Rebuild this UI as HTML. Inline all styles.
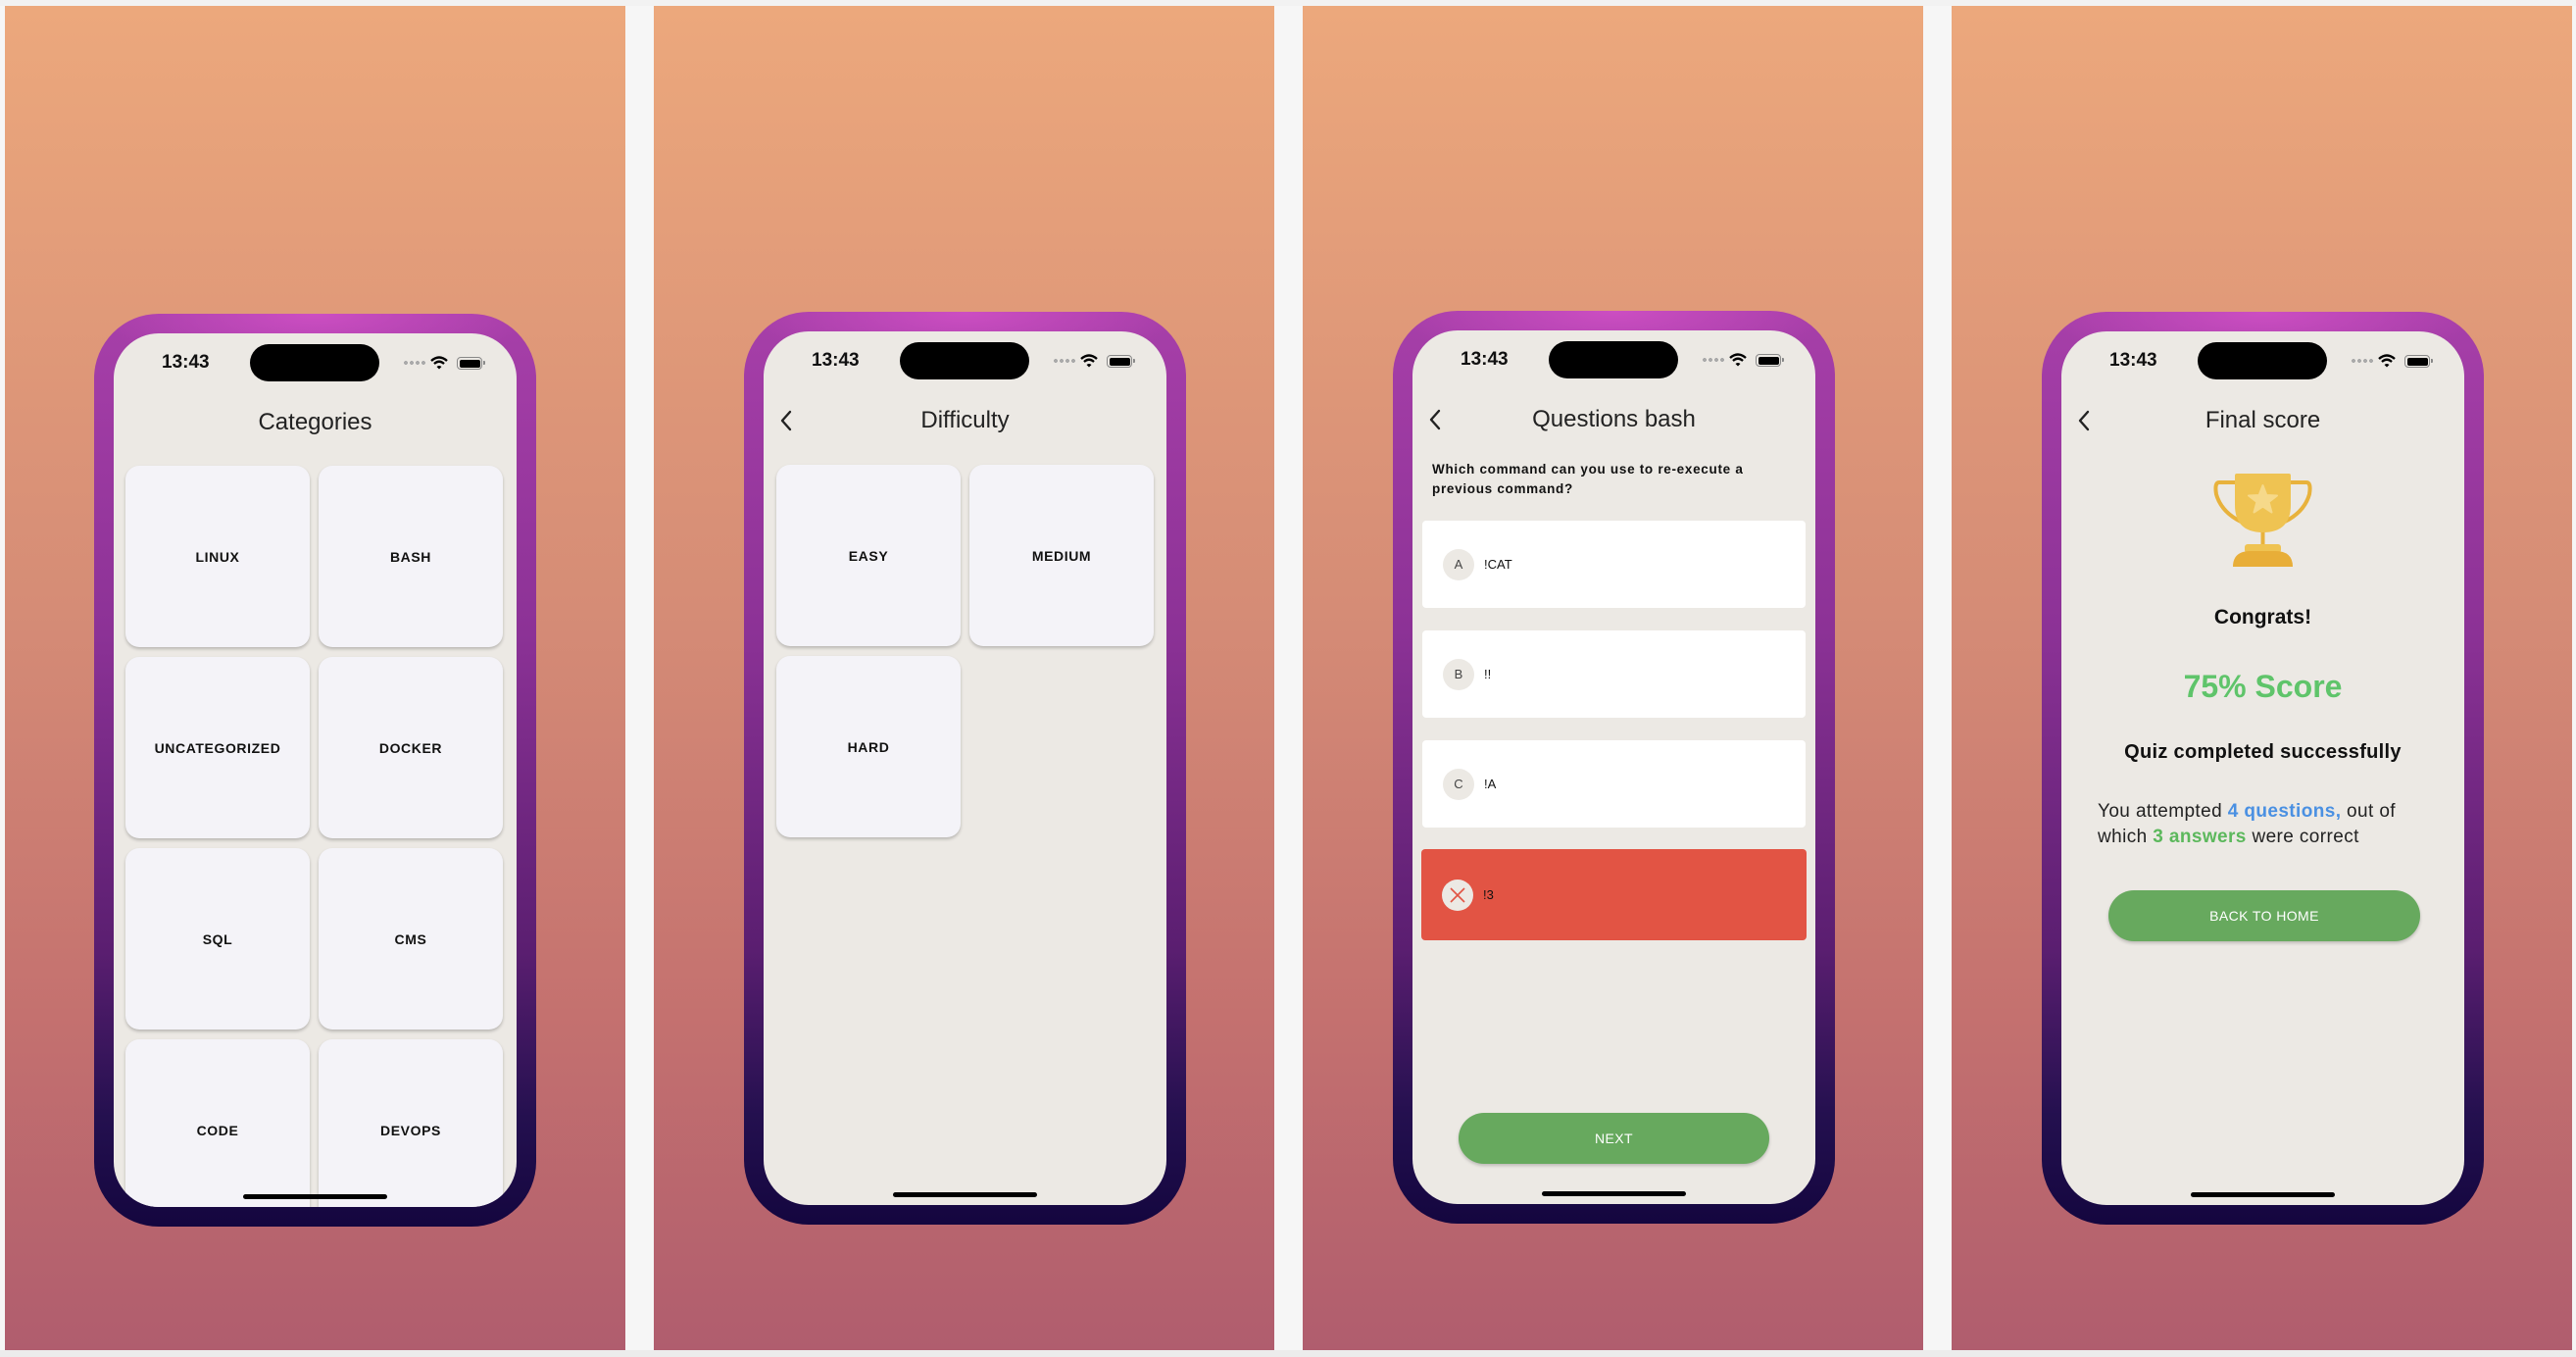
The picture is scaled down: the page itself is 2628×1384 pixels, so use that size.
<!DOCTYPE html>
<html><head><meta charset="utf-8"><style>
*{margin:0;padding:0;box-sizing:border-box}
body{width:2628px;height:1384px;background:#f6f6f6;position:relative;overflow:hidden;font-family:"Liberation Sans",sans-serif}
.topbar{position:absolute;left:0;top:0;width:2628px;height:6px;background:#f2f2f2}
.botbar{position:absolute;left:0;top:1377px;width:2628px;height:7px;background:#ececec}
.panel{position:absolute;top:6px;height:1371px;width:633px;background:linear-gradient(#eca87c,#d58c76 45%,#c4716f 75%,#b05d6e)}
.phone{position:absolute;width:451px;height:931px;border-radius:66px;background:radial-gradient(ellipse 220px 60px at 50% 0,#cc4ec2,rgba(204,78,194,0)),linear-gradient(#a73fa9,#8c3296 35%,#5a1e70 70%,#24104f 88%,#14063f)}
.screen{position:absolute;left:20px;top:20px;width:411px;height:891px;border-radius:46px;background:#ece9e4;overflow:hidden}
.time{position:absolute;left:49px;top:19px;font-size:19px;font-weight:bold;color:#111}
.island{position:absolute;left:139px;top:11px;width:132px;height:38px;border-radius:19px;background:#000}
.dots{position:absolute;left:295px;top:28px;width:24px;height:4px;background:radial-gradient(circle 2px,#aaa 95%,transparent) 0 0/6px 4px repeat-x}
.wifi{position:absolute;left:323px;top:23px}
.bat{position:absolute;left:350px;top:24px;width:26px;height:13px;border:1.5px solid #888;border-radius:4px;padding:1.5px}
.bat i{display:block;width:100%;height:100%;background:#000;border-radius:2px}
.bat:after{content:"";position:absolute;right:-4px;top:3px;width:2px;height:4px;background:#888;border-radius:0 1px 1px 0}
.title{position:absolute;left:0;width:411px;top:77px;text-align:center;font-size:24px;color:#222}
.back{position:absolute;left:14px;top:79px}
.card{position:absolute;width:188px;height:185px;background:#f4f3f8;border-radius:14px;box-shadow:0 2px 3px rgba(0,0,0,.22);display:flex;align-items:center;justify-content:center;font-size:14px;font-weight:bold;color:#111;letter-spacing:.6px}
.home{position:absolute;left:132px;top:878px;width:147px;height:5px;border-radius:3px;background:#000}
.q{position:absolute;left:20px;top:132px;width:380px;font-size:13.5px;font-weight:bold;letter-spacing:.7px;line-height:20px;color:#111}
.opt{position:absolute;left:10px;width:391px;height:89px;background:#fff;border-radius:4px}
.opt .c{position:absolute;left:21px;top:29px;width:32px;height:32px;border-radius:16px;background:#ece9e4;text-align:center;line-height:32px;font-size:13px;color:#444}
.opt .t{position:absolute;left:63px;top:37px;font-size:13px;color:#111}
.btn{position:absolute;height:52px;border-radius:26px;background:#67a95e;color:#fff;font-size:14px;text-align:center;line-height:52px;box-shadow:0 2px 3px rgba(0,0,0,.2);letter-spacing:.4px}
.center{position:absolute;left:0;width:411px;text-align:center;color:#111}
</style></head><body>
<div class="topbar"></div><div class="botbar"></div>

<!-- Panel 1 -->
<div class="panel" style="left:5px"></div>
<div class="phone" style="left:96px;top:320px"><div class="screen">
<div class="time">13:43</div><div class="island"></div><div class="dots"></div>
<svg class="wifi" width="18" height="14" viewBox="0 0 18 14"><path d="M1 5 Q9 -2 17 5" stroke="#000" stroke-width="2.4" fill="none"/><path d="M4 8 Q9 3.5 14 8" stroke="#000" stroke-width="2.4" fill="none"/><path d="M6.5 11 L9 13.5 L11.5 11 Q9 9 6.5 11Z" fill="#000"/></svg>
<div class="bat"><i></i></div>
<div class="title">Categories</div>
<div class="card" style="left:12px;top:135px">LINUX</div>
<div class="card" style="left:209px;top:135px">BASH</div>
<div class="card" style="left:12px;top:330px">UNCATEGORIZED</div>
<div class="card" style="left:209px;top:330px">DOCKER</div>
<div class="card" style="left:12px;top:525px">SQL</div>
<div class="card" style="left:209px;top:525px">CMS</div>
<div class="card" style="left:12px;top:720px">CODE</div>
<div class="card" style="left:209px;top:720px">DEVOPS</div>
<div class="home"></div>
</div></div>

<!-- Panel 2 -->
<div class="panel" style="left:667px"></div>
<div class="phone" style="left:759px;top:318px"><div class="screen">
<div class="time">13:43</div><div class="island"></div><div class="dots"></div>
<svg class="wifi" width="18" height="14" viewBox="0 0 18 14"><path d="M1 5 Q9 -2 17 5" stroke="#000" stroke-width="2.4" fill="none"/><path d="M4 8 Q9 3.5 14 8" stroke="#000" stroke-width="2.4" fill="none"/><path d="M6.5 11 L9 13.5 L11.5 11 Q9 9 6.5 11Z" fill="#000"/></svg>
<div class="bat"><i></i></div>
<svg class="back" width="20" height="24" viewBox="0 0 20 24"><polyline points="13,3 5,12 13,21" stroke="#222" stroke-width="2.4" fill="none" stroke-linecap="round" stroke-linejoin="round"/></svg>
<div class="title">Difficulty</div>
<div class="card" style="left:13px;top:136px">EASY</div>
<div class="card" style="left:210px;top:136px">MEDIUM</div>
<div class="card" style="left:13px;top:331px">HARD</div>
<div class="home"></div>
</div></div>

<!-- Panel 3 -->
<div class="panel" style="left:1329px"></div>
<div class="phone" style="left:1421px;top:317px"><div class="screen">
<div class="time">13:43</div><div class="island"></div><div class="dots"></div>
<svg class="wifi" width="18" height="14" viewBox="0 0 18 14"><path d="M1 5 Q9 -2 17 5" stroke="#000" stroke-width="2.4" fill="none"/><path d="M4 8 Q9 3.5 14 8" stroke="#000" stroke-width="2.4" fill="none"/><path d="M6.5 11 L9 13.5 L11.5 11 Q9 9 6.5 11Z" fill="#000"/></svg>
<div class="bat"><i></i></div>
<svg class="back" width="20" height="24" viewBox="0 0 20 24"><polyline points="13,3 5,12 13,21" stroke="#222" stroke-width="2.4" fill="none" stroke-linecap="round" stroke-linejoin="round"/></svg>
<div class="title">Questions bash</div>
<div class="q">Which command can you use to re-execute a previous command?</div>
<div class="opt" style="top:194px"><div class="c">A</div><div class="t">!CAT</div></div>
<div class="opt" style="top:306px"><div class="c">B</div><div class="t">!!</div></div>
<div class="opt" style="top:418px"><div class="c">C</div><div class="t">!A</div></div>
<div class="opt" style="top:529px;left:9px;width:393px;height:93px;background:#e25444"><div class="c" style="top:31px"><svg width="32" height="32" viewBox="0 0 32 32"><path d="M9 9 L23 23 M23 9 L9 23" stroke="#e25444" stroke-width="1.6"/></svg></div><div class="t" style="top:39px">!3</div></div>
<div class="btn" style="left:47px;top:798px;width:317px">NEXT</div>
<div class="home"></div>
</div></div>

<!-- Panel 4 -->
<div class="panel" style="left:1991px"></div>
<div class="phone" style="left:2083px;top:318px"><div class="screen">
<div class="time">13:43</div><div class="island"></div><div class="dots"></div>
<svg class="wifi" width="18" height="14" viewBox="0 0 18 14"><path d="M1 5 Q9 -2 17 5" stroke="#000" stroke-width="2.4" fill="none"/><path d="M4 8 Q9 3.5 14 8" stroke="#000" stroke-width="2.4" fill="none"/><path d="M6.5 11 L9 13.5 L11.5 11 Q9 9 6.5 11Z" fill="#000"/></svg>
<div class="bat"><i></i></div>
<svg class="back" width="20" height="24" viewBox="0 0 20 24"><polyline points="13,3 5,12 13,21" stroke="#222" stroke-width="2.4" fill="none" stroke-linecap="round" stroke-linejoin="round"/></svg>
<div class="title">Final score</div>
<svg style="position:absolute;left:137px;top:132px" width="140" height="120" viewBox="0 0 140 120">
<path d="M40 22 H24 Q19 22 21 34 Q26 52 46 62" stroke="#e8b23c" stroke-width="4" fill="none"/>
<path d="M97 22 H113 Q118 22 116 34 Q111 52 91 62" stroke="#e8b23c" stroke-width="4" fill="none"/>
<rect x="66.5" y="70" width="4" height="17" fill="#e8b23c"/>
<path d="M42 13 H95 Q97 13 97 15 V45 Q97 73 68.5 73 Q40 73 40 45 V15 Q40 13 42 13Z" fill="#efc352"/>
<path d="M68.5 25 L72.3 35 L83 35.5 L74.6 42 L77.5 52.5 L68.5 46.5 L59.5 52.5 L62.4 42 L54 35.5 L64.7 35Z" fill="#f6d98a" stroke="#f6d98a" stroke-width="2" stroke-linejoin="round"/>
<rect x="50" y="85" width="37" height="9" rx="3" fill="#efc352"/>
<path d="M38 108 Q38 92 56 92 H81 Q99 92 99 108Z" fill="#e8ae38"/>
</svg>
<div class="center" style="top:280px;font-size:21px;font-weight:bold">Congrats!</div>
<div class="center" style="top:344px;font-size:32px;font-weight:bold;color:#5fc46a">75% Score</div>
<div class="center" style="top:418px;font-size:20px;font-weight:bold;letter-spacing:.3px">Quiz completed successfully</div>
<div style="position:absolute;left:37px;top:477px;width:360px;font-size:19px;line-height:26px;color:#222;letter-spacing:.4px;white-space:nowrap">You attempted <b style="color:#4a90e2">4 questions,</b> out of<br>which <b style="color:#5cb85c">3 answers</b> were correct</div>
<div class="btn" style="left:48px;top:570px;width:318px">BACK TO HOME</div>
<div class="home"></div>
</div></div>
</body></html>
